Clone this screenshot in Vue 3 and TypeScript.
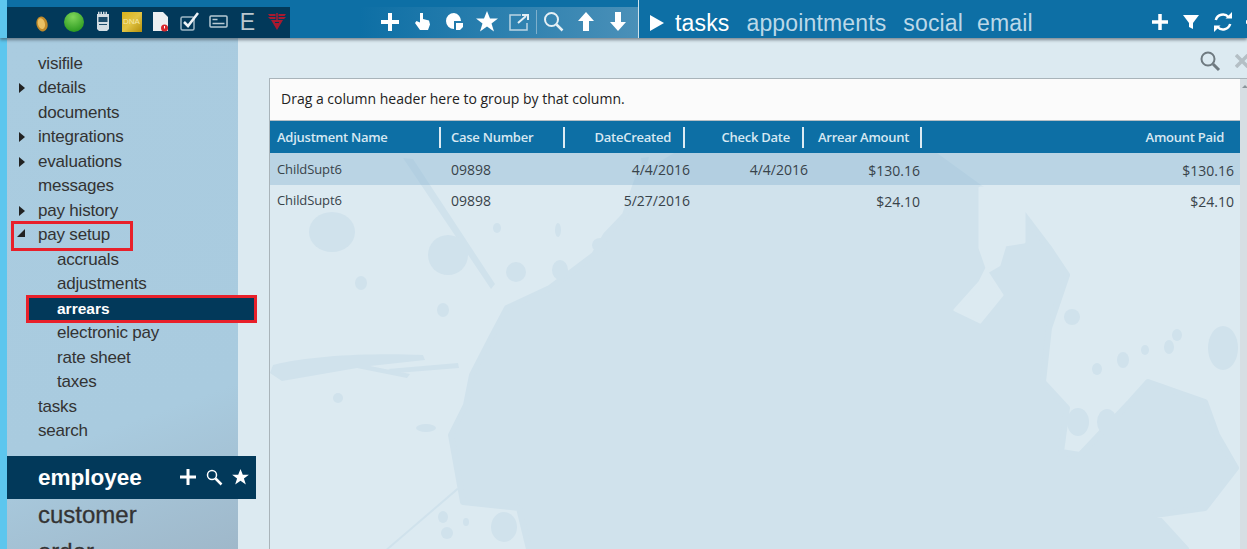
<template>
  <div class="page">
    <header class="topbar">
      <div class="status-icons">
        <span class="slot first"><svg width="14" height="18" viewBox="0 0 14 18" class="coin"><ellipse cx="7" cy="9" rx="5.500" ry="7.500" fill="#c08a2a" transform="rotate(-15 7 9)" /><ellipse cx="6.500" cy="8.500" rx="3.500" ry="5.500" fill="#e9c063" transform="rotate(-15 7 9)" /></svg></span>
        <span class="slot"><svg width="22" height="22" viewBox="0 0 22 22"><defs><radialGradient id="ball" cx="45%" cy="25%" r="75%"><stop offset="0" stop-color="#7fd65a" /><stop offset="1" stop-color="#2c9a20" /></radialGradient></defs><circle cx="11" cy="11" r="10" fill="url(#ball)" /></svg></span>
        <span class="slot"><svg width="14" height="21" viewBox="0 0 14 21"><path d="M1 3h12v15l-2 2H3l-2-2z" fill="#d3dde3" /><path d="M2 2h10" stroke="#d3dde3" stroke-width="2.500" stroke-dasharray="1.500 1" /><rect x="2.500" y="6" width="9" height="5" fill="#1c4c6b" /><path d="M3 13.500h8" stroke="#1c4c6b" /></svg></span>
        <span class="slot"><div class="dna">DNA</div></span>
        <span class="slot"><svg width="17" height="21" viewBox="0 0 17 21"><path d="M1 1h10l5 5v14H1z" fill="#eceff1" /><circle cx="12.500" cy="17" r="3.500" fill="#d8262c" /><path d="M12.500 15v2.500" stroke="#fff" /></svg></span>
        <span class="slot"><svg width="20" height="19" viewBox="0 0 20 19"><rect x="1" y="5" width="13" height="13" rx="1.500" fill="none" stroke="#9fb8c6" stroke-width="1.500" /><path d="M4 10l4 4 10-13" fill="none" stroke="#eef3f6" stroke-width="2.500" /></svg></span>
        <span class="slot"><svg width="19" height="13" viewBox="0 0 19 13"><rect x="1" y="1" width="17" height="11" rx="1" fill="none" stroke="#b7c9d3" stroke-width="1.500" /><path d="M3.500 4.500h5M3.500 8.500h12" stroke="#b7c9d3" stroke-width="1.500" /></svg></span>
        <span class="slot letter">E</span>
        <span class="slot"><svg width="18" height="17" viewBox="0 0 18 17"><path d="M0 1h7.500v2H1.500zM0 4h7.500v2H2zM18 1h-7.500v2h6zM18 4h-7.500v2H16zM3 7h12l-6 10z" fill="#a81a30" /><path d="M9 0v14" stroke="#a81a30" stroke-width="1.500" /><path d="M7 9.500h4" stroke="#02395a" /></svg></span>
      </div>
      <div class="tools">
        <span class="tool"><svg width="20" height="20" viewBox="0 0 20 20"><path d="M10 1v18M1 10h18" stroke="#fff" stroke-width="4" /></svg></span>
        <span class="tool"><svg width="17" height="19" viewBox="0 0 17 19"><path d="M6 1h3v6l6 1.500 1 4-2 5.500H6L1 11l1.500-2L6 10.500z" fill="#fff" /></svg></span>
        <span class="tool"><svg width="19" height="20" viewBox="0 0 19 20"><path d="M9 1a8 8 0 1 0 0 16V9h7a8 8 0 0 0-7-8z" fill="#fff" /><path d="M11 11h7v4l-3 3h-4z" fill="#fff" /></svg></span>
        <span class="tool"><svg width="22" height="21" viewBox="0 0 22 21"><path d="M11 0l3 7.500h8l-6.500 5 2.500 8-7-5-7 5 2.500-8L0 7.500h8z" fill="#fff" /></svg></span>
        <span class="tool"><svg width="21" height="18" viewBox="0 0 21 18"><path d="M12 2H1v15h17v-7" fill="none" stroke="#bcd5e3" stroke-width="1.500" /><path d="M9 10l8-7M13 2h6v5" fill="none" stroke="#e4eff5" stroke-width="2" /></svg></span>
        <i class="tool-sep"></i>
        <span class="tool"><svg width="21" height="21" viewBox="0 0 21 21"><circle cx="8.500" cy="8.500" r="6.500" fill="none" stroke="#e6f0f5" stroke-width="2" /><path d="M13.500 13.500l6 6" stroke="#e6f0f5" stroke-width="2.500" /></svg></span>
        <span class="tool"><svg width="18" height="19" viewBox="0 0 18 19"><path d="M9 0l8 9h-5v10H6V9H1z" fill="#fff" /></svg></span>
        <span class="tool"><svg width="18" height="19" viewBox="0 0 18 19"><path d="M9 19l8-9h-5V0H6v10H1z" fill="#fff" /></svg></span>
      </div>
      <nav class="tabs">
        <svg width="14" height="16" viewBox="0 0 14 16"><path d="M0 0l14 8-14 8z" fill="#fff" /></svg>
        <a class="tab active">tasks</a>
        <a v-for="tab in tabs" :key="tab" class="tab">{{ tab }}</a>
      </nav>
      <div class="right-tools">
        <svg width="18" height="18" viewBox="0 0 18 18"><path d="M9 1v16M1 9h16" stroke="#fff" stroke-width="3.500" /></svg>
        <svg width="16" height="16" viewBox="0 0 16 16"><path d="M0 1h16l-6 8v6l-4-2V9z" fill="#fff" /></svg>
        <svg width="20" height="20" viewBox="0 0 20 20"><path d="M2.800 8A7.500 7.500 0 0 1 15.500 5M17.200 12A7.500 7.500 0 0 1 4.500 15" fill="none" stroke="#fff" stroke-width="2.500" /><path d="M12.500 6.500H19V0zM7.500 13.500H1V20z" fill="#fff" /></svg>
        <svg class="clipped" width="18" height="18" viewBox="0 0 18 18"><path d="M9 1v16M1 9h16" stroke="#fff" stroke-width="3.500" /></svg>
      </div>
    </header>

    <div class="body">
      <aside class="sidebar">
        <ul class="tree">
          <li v-for="item in tree" :key="item.label" class="tree-item" :class="{ child: item.child, current: item.current, marked: item.marked }">
            <i v-if="item.arrow === 'closed'" class="arrow-closed"></i>
            <i v-if="item.arrow === 'open'" class="arrow-open"></i>
            {{ item.label }}
          </li>
        </ul>
        <div class="section-head">
          <span>employee</span>
          <div class="section-tools">
            <svg width="18" height="18" viewBox="0 0 18 18"><path d="M9 1v16M1 9h16" stroke="#fff" stroke-width="3" /></svg>
            <svg width="17" height="17" viewBox="0 0 17 17"><circle cx="6" cy="6" r="4.500" fill="none" stroke="#fff" stroke-width="1.500" /><path d="M9.500 9.500l6 6" stroke="#fff" stroke-width="2.500" /></svg>
            <svg width="17" height="16" viewBox="0 0 22 21"><path d="M11 0l3 7.500h8l-6.500 5 2.500 8-7-5-7 5 2.500-8L0 7.500h8z" fill="#fff" /></svg>
          </div>
        </div>
        <div class="section">customer</div>
        <div class="section">order</div>
      </aside>

      <main class="main">
        <!-- paint splatter behind the grid -->
        <svg class="splat" width="1009" height="511" viewBox="0 0 1009 511" fill="#d0e2ec">
          <path stroke="#d0e2ec" stroke-width="6" stroke-linejoin="round" d="M387 177l13-37 50-30 110-15 120 10 62 45 44 27 25 33 18 27-18 53-6 54 24 26-6 44 19 3 50-53 18-20 57 20 12 33 19 33-31 40-50 7 31 34H291l-10-41-56-6-12-67 15-30 6-30 19-37 16-30 43-20 44-33 12-20z" />
          <path fill="#dceaf1" stroke="#dceaf1" stroke-width="3" stroke-linejoin="round" d="M742 150h44v54l-19 3-6 20-12 7 15 23-22 27-25-12 25-28 7-14-7-20z" />
          <path d="M35 327c40-10 100-12 150-10l2 5-55 6 40 8-3 4-50-10-75 13-12-8zM150 331l70-6 1 5-62 5z" />
          <path d="M165 120l10 1 82 125-4 5zM219 450l2 1-70 60h-3zM403 120l8-1-6 24z" />
          <ellipse cx="94" cy="194" rx="23" ry="20" />
          <ellipse cx="123" cy="245" rx="6" ry="7" />
          <ellipse cx="210" cy="217" rx="20" ry="20" />
          <ellipse cx="205" cy="272" rx="6" ry="7" />
          <ellipse cx="259" cy="190" rx="4" ry="5" />
          <ellipse cx="320" cy="192" rx="3" ry="7" />
          <ellipse cx="322" cy="232" rx="8" ry="10" />
          <ellipse cx="362" cy="207" rx="8" ry="7" />
          <ellipse cx="278" cy="234" rx="10" ry="10" />
          <ellipse cx="100" cy="360" rx="5" ry="5" />
          <ellipse cx="188" cy="390" rx="10" ry="4" />
          <ellipse cx="834" cy="279" rx="8" ry="8" />
          <ellipse cx="885" cy="322" rx="6" ry="8" />
          <ellipse cx="931" cy="309" rx="5" ry="7" />
          <ellipse cx="907" cy="312" rx="4" ry="5" />
          <ellipse cx="859" cy="331" rx="5" ry="6" />
          <ellipse cx="939" cy="297" rx="5" ry="6" />
          <ellipse cx="985" cy="310" rx="15" ry="22" />
          <ellipse cx="840" cy="384" rx="11" ry="14" />
          <ellipse cx="869" cy="384" rx="10" ry="13" />
          <ellipse cx="266" cy="489" rx="13" ry="15" />
          <ellipse cx="205" cy="479" rx="5" ry="6" />
          <ellipse cx="209" cy="495" rx="6" ry="6" />
          <ellipse cx="228" cy="484" rx="3" ry="4" />
        </svg>
        <div class="search-row">
          <svg width="22" height="22" viewBox="0 0 22 22"><circle cx="9" cy="9" r="6.500" fill="none" stroke="#6f7a80" stroke-width="2" /><path d="M14 14l6 6" stroke="#6f7a80" stroke-width="3" /></svg>
          <svg width="14" height="14" viewBox="0 0 14 14"><path d="M1 1l12 12M13 1L1 13" stroke="#b4bfc5" stroke-width="3.500" /></svg>
        </div>
        <section class="grid">
          <div class="group-bar">Drag a column header here to group by that column.</div>
          <div class="grid-head">
            <div v-for="col in columns" :key="col.label" class="head-cell" :class="col.cls"><span>{{ col.label }}</span></div>
          </div>
          <div v-for="(row, i) in rows" :key="i" class="row" :class="{ alt: i === 0 }">
            <span class="name">{{ row.name }}</span>
            <span>{{ row.caseNo }}</span>
            <span class="num">{{ row.created }}</span>
            <span class="num">{{ row.checked }}</span>
            <span class="num money">{{ row.arrear }}</span>
            <span class="num money">{{ row.paid }}</span>
          </div>
        </section>
      </main>
    </div>
  </div>
</template>

<script setup lang="ts">
interface TreeItem {
  label: string
  arrow?: 'closed' | 'open'
  child?: boolean
  current?: boolean
  marked?: boolean
}

const tabs = ['appointments', 'social', 'email']

const tree: TreeItem[] = [
  { label: 'visifile' },
  { label: 'details', arrow: 'closed' },
  { label: 'documents' },
  { label: 'integrations', arrow: 'closed' },
  { label: 'evaluations', arrow: 'closed' },
  { label: 'messages' },
  { label: 'pay history', arrow: 'closed' },
  { label: 'pay setup', arrow: 'open', marked: true },
  { label: 'accruals', child: true },
  { label: 'adjustments', child: true },
  { label: 'arrears', child: true, current: true },
  { label: 'electronic pay', child: true },
  { label: 'rate sheet', child: true },
  { label: 'taxes', child: true },
  { label: 'tasks' },
  { label: 'search' }
]

const columns = [
  { label: 'Adjustment Name', cls: '' },
  { label: 'Case Number', cls: '' },
  { label: 'DateCreated', cls: 'right' },
  { label: 'Check Date', cls: 'right' },
  { label: 'Arrear Amount', cls: 'arrear' },
  { label: 'Amount Paid', cls: 'right last' }
]

const rows = [
  { name: 'ChildSupt6', caseNo: '09898', created: '4/4/2016', checked: '4/4/2016', arrear: '$130.16', paid: '$130.16' },
  { name: 'ChildSupt6', caseNo: '09898', created: '5/27/2016', checked: '', arrear: '$24.10', paid: '$24.10' }
]
</script>

<style>
html,
body {
  margin: 0;
  height: 549px;
  overflow: hidden;
}
</style>

<style scoped>
.page {
  width: 1247px;
  height: 549px;
  overflow: hidden;
  background: #5dc6ee;
  padding-left: 7px;
  box-sizing: border-box;
  font-family: "Liberation Sans", Arial, sans-serif;
  display: flex;
  flex-direction: column;
}
.topbar {
  height: 38px;
  flex: none;
  margin-left: -7px;
  padding: 7px 0 0 7px;
  box-sizing: border-box;
  background: linear-gradient(90deg, #5dc6ee 7px, #0d6fa5 7px);
  display: flex;
  position: relative;
  z-index: 2;
  box-shadow: 0 2px 3px rgba(60, 70, 80, 0.6);
}
.status-icons {
  width: 283px;
  flex: none;
  background: #02395a;
  display: flex;
  align-items: center;
  padding: 0 0 2px 20px;
  box-sizing: border-box;
}
.slot {
  width: 29px;
  flex: none;
  display: flex;
  justify-content: center;
  align-items: center;
}
.slot.first {
  margin-right: 3px;
}
.coin {
  margin-top: 4px;
}
.dna {
  width: 20px;
  height: 20px;
  background: linear-gradient(135deg, #d9b21c, #e2c443 50%, #b48f0c);
  color: #f6e9a8;
  font-size: 8px;
  line-height: 20px;
  text-align: center;
}
.letter {
  color: #b9c6ce;
  font-size: 23px;
  line-height: 1;
  padding-top: 2px;
}
.tools {
  width: 348px;
  flex: none;
  background: linear-gradient(90deg, #0d6fa5 20%, #4a90b8);
  display: flex;
  align-items: center;
  padding: 0 0 2px 84px;
  box-sizing: border-box;
}
.tool {
  width: 32.400px;
  flex: none;
  display: flex;
  justify-content: center;
  align-items: center;
}
.tool-sep {
  width: 1px;
  height: 24px;
  background: #7fb0cc;
  flex: none;
}
.tabs {
  margin-top: -7px;
  border-left: 1px solid #cfe2ec;
  padding: 8px 0 0 11px;
  width: 513px;
  flex: none;
  box-sizing: border-box;
  display: flex;
  align-items: center;
  gap: 17px;
}
.tabs svg {
  margin-top: -1px;
}
.tab {
  color: #bcd8e8;
  font-size: 23px;
  line-height: 1;
  letter-spacing: 0.15px;
}
.tab.active {
  color: #fff;
  margin-left: -6px;
}
.tab:last-child {
  margin-left: -3px;
}
.right-tools {
  display: flex;
  align-items: center;
  gap: 14px;
  padding-bottom: 2px;
  flex: none;
}
.right-tools svg {
  flex: none;
}
.right-tools .clipped {
  margin-left: -2px;
}
.body {
  flex: 1;
  display: flex;
  min-height: 0;
}
.sidebar {
  width: 231px;
  flex: none;
  padding-top: 13.700px;
  box-sizing: border-box;
  background: linear-gradient(160deg, #aacce0 0%, #a9cbdf 72%, #9fb8ca 100%);
  position: relative;
  z-index: 1;
}
.tree {
  list-style: none;
  margin: 0;
  padding: 0;
}
.tree-item {
  height: 24.500px;
  line-height: 24.500px;
  padding-left: 31px;
  font-size: 17px;
  letter-spacing: -0.2px;
  color: #333;
  position: relative;
}
.tree-item.child {
  padding-left: 50px;
}
.tree-item.current {
  margin: 1.250px -16px 1.250px 22px;
  padding-left: 28px;
  background: #02395a;
  color: #fff;
  font-weight: bold;
  font-size: 15.500px;
  letter-spacing: 0;
  height: 22px;
  line-height: 22px;
}
.tree-item.current::after {
  content: "";
  position: absolute;
  inset: -3px;
  border: 3px solid #e8202a;
}
.tree-item.marked::after {
  content: "";
  position: absolute;
  left: 4px;
  top: -2px;
  width: 116px;
  height: 24px;
  border: 3px solid #e8202a;
}
.arrow-closed {
  position: absolute;
  left: 12px;
  top: 7px;
  border-left: 6px solid #222;
  border-top: 5px solid transparent;
  border-bottom: 5px solid transparent;
}
.arrow-open {
  position: absolute;
  left: 10px;
  top: 6px;
  border-right: 8px solid #222;
  border-top: 8px solid transparent;
}
.section-head {
  margin-top: 12.300px;
  margin-right: -18px;
  height: 43px;
  background: #02395a;
  color: #fff;
  font-size: 22.500px;
  font-weight: bold;
  display: flex;
  align-items: center;
  justify-content: space-between;
  padding: 2px 7px 0 31px;
  box-sizing: border-box;
  position: relative;
}
.section-tools {
  display: flex;
  align-items: center;
  gap: 9px;
  margin-top: -2px;
}
.section {
  height: 32px;
  line-height: 32px;
  padding-left: 31px;
  font-size: 24px;
  color: #333;
  -webkit-text-stroke: 0.3px #333;
}
.section + .section {
  margin-top: 5px;
}
.main {
  flex: 1;
  min-width: 0;
  position: relative;
  background: #dceaf1;
  display: flex;
  flex-direction: column;
}
.splat {
  position: absolute;
  left: 0;
  top: 0;
}
.search-row {
  height: 40px;
  flex: none;
  display: flex;
  justify-content: flex-end;
  align-items: center;
  gap: 14px;
  padding: 5px 0 0;
  box-sizing: border-box;
  margin-right: -2px;
  position: relative;
}
.grid {
  flex: 1;
  margin-left: 31px;
  border-left: 1px solid #a9b4ba;
  border-top: 1px solid #a9b4ba;
  background: linear-gradient(90deg, transparent 970px, #d6dee3 970px);
  position: relative;
  font-family: "Open Sans", sans-serif;
}
.grid::after {
  content: "";
  position: absolute;
  left: 972px;
  top: 6px;
  border-left: 3px solid transparent;
  border-right: 3px solid transparent;
  border-bottom: 3px solid #8a959b;
}
.group-bar {
  width: 970px;
  height: 42px;
  box-sizing: border-box;
  padding-left: 11px;
  background: #fbfbfb;
  border-bottom: 1px solid #b5bfc5;
  font-size: 14px;
  line-height: 40px;
  color: #222;
}
.grid-head {
  width: 970px;
  height: 32px;
  background: #0d6fa5;
  display: grid;
  grid-template-columns: 171px 124px 120px 119px 118px 1fr;
  align-items: center;
}
.head-cell {
  height: 21px;
  line-height: 21px;
  padding: 0 12px 0 7px;
  box-sizing: border-box;
  color: #d7e8f2;
  font-size: 13px;
  font-weight: 600;
  border-right: 2px solid #dcebf3;
  white-space: nowrap;
  letter-spacing: -0.25px;
}
.head-cell + .head-cell {
  padding-left: 10px;
}
.head-cell.right {
  text-align: right;
}
.head-cell.arrear {
  padding-left: 14px;
  padding-right: 0;
}
.head-cell.last {
  border-right: 0;
  padding-right: 16px;
}
.row {
  width: 970px;
  height: 32px;
  display: grid;
  grid-template-columns: 181px 100px 139px 118px 112px 1fr;
  align-items: center;
  font-size: 14px;
  color: #38434a;
  position: relative;
  box-sizing: border-box;
  padding-right: 6px;
}
.row + .row {
  margin-top: -1px;
}
.row.alt {
  background: rgba(135, 180, 210, 0.4);
}
.name {
  padding-left: 7px;
  font-size: 13px;
  letter-spacing: -0.1px;
}
.num {
  text-align: right;
  white-space: nowrap;
}
.money {
  padding-top: 2px;
}
</style>
